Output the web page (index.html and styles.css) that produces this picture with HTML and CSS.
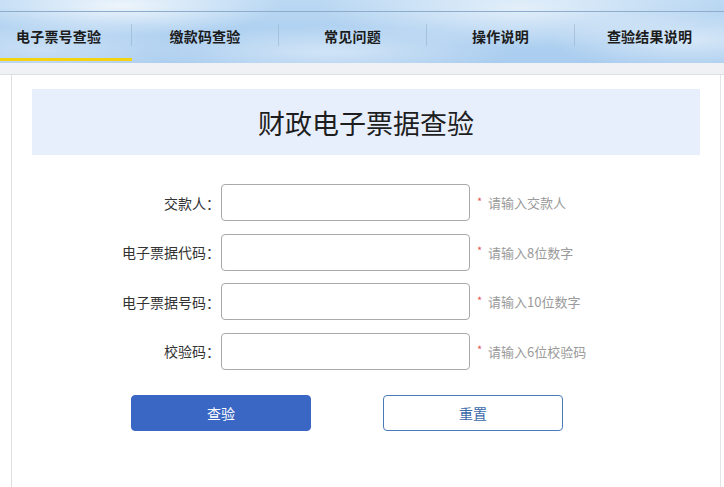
FILE: index.html
```html
<!DOCTYPE html>
<html lang="zh-CN">
<head>
<meta charset="utf-8">
<title>财政电子票据查验</title>
<link rel="stylesheet" href="styles.css">
</head>
<body>
<header class="sky">
  <div class="topline"></div>
  <nav class="tabs">
    <a class="tab tab-first active">电子票号查验</a>
    <span class="sep"></span>
    <a class="tab tab-2">缴款码查验</a>
    <span class="sep"></span>
    <a class="tab tab-3">常见问题</a>
    <span class="sep"></span>
    <a class="tab tab-4">操作说明</a>
    <span class="sep"></span>
    <a class="tab tab-5">查验结果说明</a>
  </nav>
</header>
<div class="band"></div>
<main class="panel">
  <h1 class="title">财政电子票据查验</h1>
  <form class="form">
    <div class="row">
      <label class="label">交款人：</label>
      <input class="field" type="text">
      <span class="star">*</span>
      <span class="hint">请输入交款人</span>
    </div>
    <div class="row">
      <label class="label">电子票据代码：</label>
      <input class="field" type="text">
      <span class="star">*</span>
      <span class="hint">请输入8位数字</span>
    </div>
    <div class="row">
      <label class="label">电子票据号码：</label>
      <input class="field" type="text">
      <span class="star">*</span>
      <span class="hint">请输入10位数字</span>
    </div>
    <div class="row">
      <label class="label">校验码：</label>
      <input class="field" type="text">
      <span class="star">*</span>
      <span class="hint">请输入6位校验码</span>
    </div>
    <div class="actions">
      <button class="btn btn-primary" type="button">查验</button>
      <button class="btn btn-ghost" type="reset">重置</button>
    </div>
  </form>
</main>
</body>
</html>
```
FILE: styles.css
```css
* { box-sizing: border-box; }
html, body { margin: 0; padding: 0; background: #fff; }
body {
  width: 724px;
  height: 487px;
  overflow: hidden;
  font-family: "Microsoft YaHei", "Noto Sans CJK SC", "Noto Sans", sans-serif;
  color: #333;
}

.sky {
  height: 63px;
  background:
    radial-gradient(ellipse 160px 30px at 120px 6px, rgba(255,255,255,.75), rgba(255,255,255,0)),
    radial-gradient(ellipse 200px 40px at 520px 8px, rgba(255,255,255,.6), rgba(255,255,255,0)),
    radial-gradient(ellipse 140px 30px at 690px 40px, rgba(255,255,255,.5), rgba(255,255,255,0)),
    radial-gradient(ellipse 180px 26px at 330px 52px, rgba(255,255,255,.45), rgba(255,255,255,0)),
    radial-gradient(ellipse 160px 30px at 40px 50px, rgba(255,255,255,.35), rgba(255,255,255,0)),
    linear-gradient(180deg, #bcd9f3 0%, #b1d2f1 40%, #aacdef 100%);
}
.topline {
  height: 12px;
  border-bottom: 1px solid #8eadcc;
}
.tabs {
  display: flex;
  height: 51px;
  align-items: stretch;
}
.tab {
  display: flex;
  align-items: center;
  justify-content: center;
  padding-bottom: 4px;
  font-size: 14px;
  font-weight: bold;
  color: #1c1c1c;
  text-decoration: none;
  letter-spacing: 0.2px;
}
.tab-first { width: 131px; justify-content: flex-start; padding-left: 16px; }
.tab-2 { width: 146px; }
.tab-3 { width: 147px; }
.tab-4 { width: 147px; }
.tab-5 { width: 149px; }
.active {
  width: 132px;
  background: linear-gradient(#f4d313, #f4d313) no-repeat left bottom 2px / 100% 3px;
}
.tab-first.active { margin-right: -1px; }
.sep {
  width: 1px;
  height: 22px;
  align-self: center;
  margin-top: -6px;
  background: rgba(150, 175, 200, 0.55);
}

.band {
  height: 12px;
  background: #eff1f5;
  border-bottom: 1px solid #dcdfe4;
}

.panel {
  margin-left: 11px;
  width: 710px;
  height: 412px;
  border-left: 1px solid #dedede;
  border-right: 1px solid #e4e4e4;
  padding: 14px 20px 0;
}
.title {
  margin: 0;
  height: 66px;
  background: #e8effc;
  display: flex;
  align-items: center;
  justify-content: center;
  font-size: 27px;
  font-weight: normal;
  color: #1e1e1e;
}

.form {
  margin-top: 29px;
  display: flex;
  flex-direction: column;
  gap: 12.5px;
}
.row {
  display: flex;
  align-items: center;
  height: 37px;
}
.label {
  width: 188px;
  text-align: right;
  font-size: 14px;
  color: #333;
  margin-right: 1px;
  white-space: nowrap;
}
.field {
  width: 249px;
  height: 37px;
  border: 1px solid #a9a9a9;
  border-radius: 4px;
  background: #fff;
  outline: none;
  padding: 0 8px;
  font-size: 14px;
}
.star {
  margin-left: 7px;
  width: 11px;
  color: #e05a5a;
  font-size: 11px;
  margin-top: -4px;
}
.hint {
  font-size: 13px;
  color: #9a9a9a;
}

.actions {
  display: flex;
  gap: 72px;
  margin-top: 13px;
  padding-left: 99px;
}
.btn {
  width: 180px;
  height: 36px;
  border-radius: 4px;
  font-family: inherit;
  font-size: 14px;
  cursor: pointer;
}
.btn-primary {
  background: #3a67c3;
  border: 1px solid #3a67c3;
  color: #fff;
}
.btn-ghost {
  background: #fff;
  border: 1px solid #4a7bb8;
  color: #3a6aa8;
}
```
